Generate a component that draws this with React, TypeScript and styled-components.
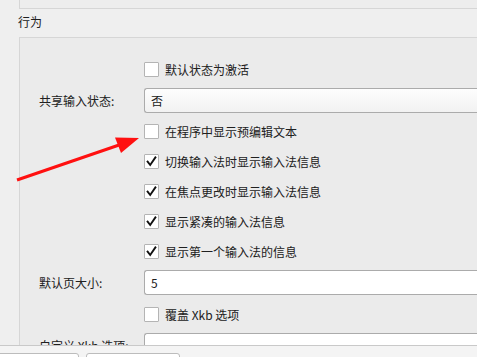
import React from 'react';
import styled, { createGlobalStyle } from 'styled-components';

const GlobalStyle = createGlobalStyle`
  html, body {
    margin: 0;
    padding: 0;
    background: #efefef;
  }
  body {
    font-family: "Noto Sans CJK SC", "Noto Sans", sans-serif;
    font-size: 12px;
    color: #202020;
  }
`;

const Window = styled.div`
  position: relative;
  width: 477px;
  height: 357px;
  overflow: hidden;
  display: flex;
  flex-direction: column;
  background: #efefef;
`;

const ScrollArea = styled.div`
  height: 345px;
  flex-shrink: 0;
  overflow: hidden;
  display: flex;
  flex-direction: column;
`;

const PrevGroup = styled.div`
  margin-left: 19px;
  height: 8px;
  border: 1px solid #d6d6d6;
  border-top: none;
  border-right: none;
  background: #ededed;
  flex-shrink: 0;
`;

const SectionTitle = styled.div`
  height: 28px;
  line-height: 26px;
  padding-left: 18px;
  font-size: 12px;
  flex-shrink: 0;
`;

const GroupBox = styled.div`
  margin-left: 19px;
  border: 1px solid #d6d6d6;
  border-right: none;
  border-bottom: none;
  background: #ebebeb;
  padding: 16px 0 0 19px;
  flex: 1;
  display: flex;
  flex-direction: column;
`;

const Row = styled.div<{ $h: number }>`
  display: flex;
  align-items: center;
  height: ${p => p.$h}px;
  flex-shrink: 0;
`;

const Label = styled.div`
  width: 105px;
  flex-shrink: 0;
  white-space: nowrap;
`;

const Box = styled.div`
  width: 13px;
  height: 13px;
  border: 1px solid #b4b4b4;
  border-radius: 1px;
  background: #ffffff;
  display: flex;
  align-items: center;
  justify-content: center;
  flex-shrink: 0;
`;

const CheckText = styled.span`
  margin-left: 6px;
  white-space: nowrap;
`;

const Field = styled.div<{ $combo?: boolean }>`
  flex: 1;
  height: 23px;
  border: 1px solid #ababab;
  border-right: none;
  border-radius: 3px 0 0 3px;
  background: ${p => (p.$combo ? 'linear-gradient(#fdfdfd, #f2f2f2)' : '#ffffff')};
  display: flex;
  align-items: center;
  padding-left: 6px;
`;

const ButtonBar = styled.div`
  flex: 1;
  min-height: 0;
  overflow: hidden;
  border-top: 1px solid #c9c9c9;
  background: #f4f4f4;
  display: flex;
  align-items: flex-start;
  gap: 7px;
  padding: 7px 0 0 0;
  margin-left: -4px;
`;

const BarButton = styled.div<{ $w: number }>`
  width: ${p => p.$w}px;
  height: 20px;
  flex-shrink: 0;
  border: 1px solid #bcbcbc;
  border-radius: 3px;
  background: #ffffff;
`;

const ArrowLayer = styled.svg`
  position: absolute;
  left: 0;
  top: 0;
  pointer-events: none;
`;

function Check({ checked, text }: { checked?: boolean; text: string }) {
  return (
    <>
      <Box>
        {checked && (
          <svg width="11" height="11" viewBox="0 0 11 11">
            <path d="M1.6 5.6 L4.2 9 L9.4 1.4" fill="none" stroke="#111" strokeWidth="1.9" strokeLinecap="square" strokeLinejoin="miter" />
          </svg>
        )}
      </Box>
      <CheckText>{text}</CheckText>
    </>
  );
}

export default function App() {
  return (
    <>
      <GlobalStyle />
      <Window>
        <ScrollArea>
          <PrevGroup />
          <SectionTitle>行为</SectionTitle>
          <GroupBox>
            <Row $h={30}>
              <Label />
              <Check text="默认状态为激活" />
            </Row>
            <Row $h={32}>
              <Label>共享输入状态:</Label>
              <Field $combo>否</Field>
            </Row>
            <Row $h={30}>
              <Label />
              <Check text="在程序中显示预编辑文本" />
            </Row>
            <Row $h={30}>
              <Label />
              <Check checked text="切换输入法时显示输入法信息" />
            </Row>
            <Row $h={30}>
              <Label />
              <Check checked text="在焦点更改时显示输入法信息" />
            </Row>
            <Row $h={30}>
              <Label />
              <Check checked text="显示紧凑的输入法信息" />
            </Row>
            <Row $h={30}>
              <Label />
              <Check checked text="显示第一个输入法的信息" />
            </Row>
            <Row $h={33}>
              <Label>默认页大小:</Label>
              <Field>5</Field>
            </Row>
            <Row $h={30}>
              <Label />
              <Check text="覆盖 Xkb 选项" />
            </Row>
            <Row $h={32}>
              <Label>自定义 Xkb 选项:</Label>
              <Field />
            </Row>
          </GroupBox>
        </ScrollArea>
        <ButtonBar>
          <BarButton $w={81} />
          <BarButton $w={92} />
        </ButtonBar>
        <ArrowLayer width="477" height="357">
          <line x1="17" y1="180" x2="122" y2="144" stroke="#ff1010" strokeWidth="3" />
          <polygon points="115,137.5 139,138 121,153" fill="#ff1010" />
        </ArrowLayer>
      </Window>
    </>
  );
}
